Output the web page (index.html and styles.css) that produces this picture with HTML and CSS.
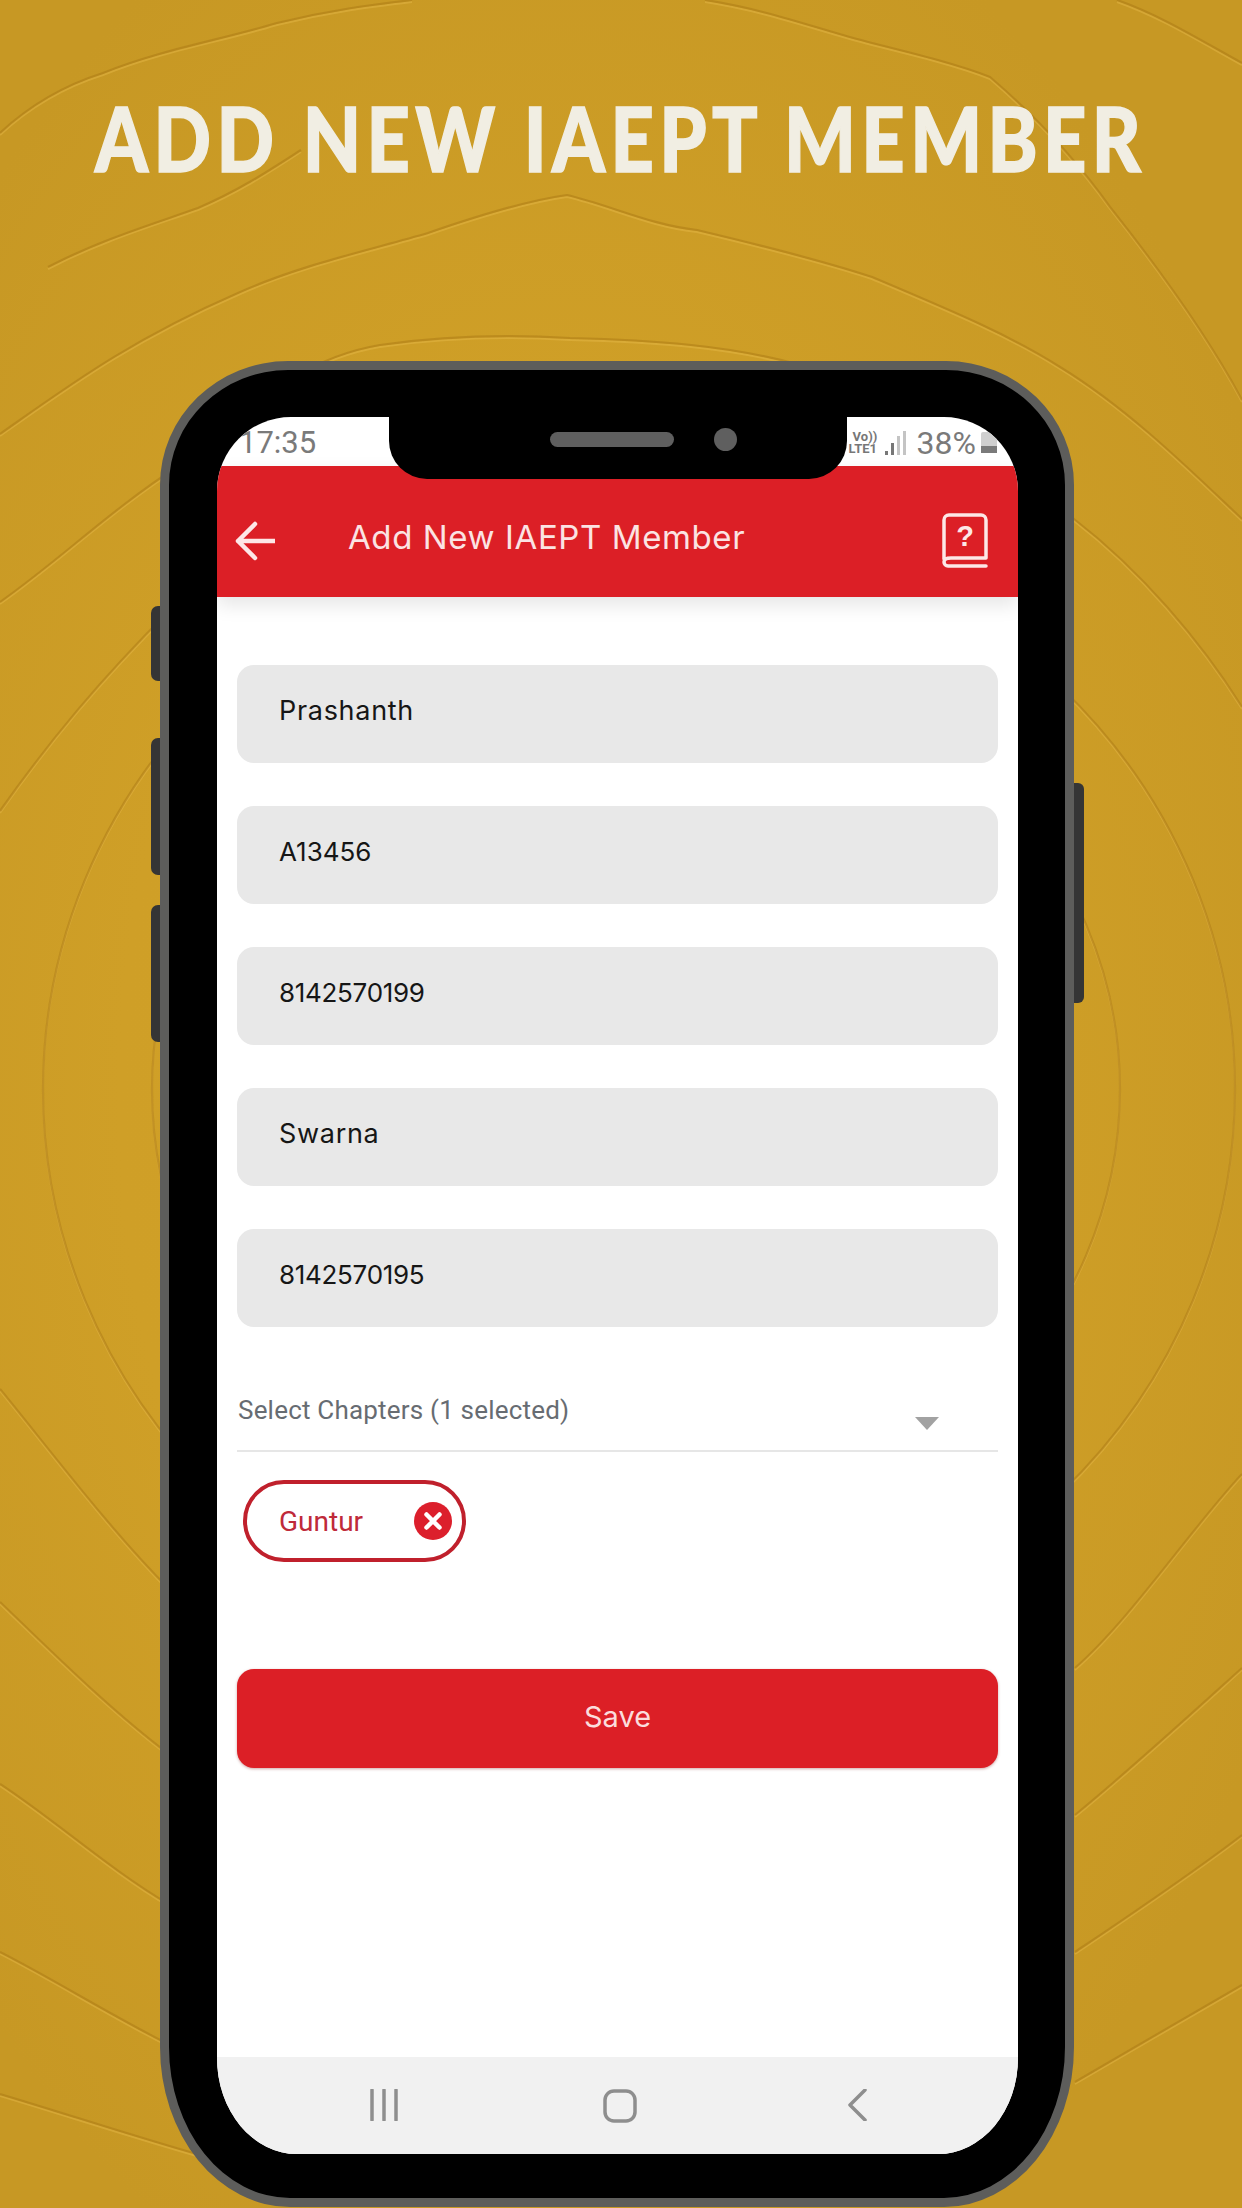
FILE: index.html
```html
<!DOCTYPE html>
<html lang="en">
<head>
<meta charset="utf-8">
<title>Add New IAEPT Member</title>
<link rel="stylesheet" href="styles.css">
</head>
<body>
<div class="page">
  <svg class="contours" viewBox="0 0 1242 2208" aria-hidden="true">
    <defs>
      <g id="rings" fill="none">
        <ellipse cx="636" cy="1090" rx="484" ry="450"/>
        <ellipse cx="639" cy="1090" rx="596" ry="570"/>
        <path d="M0 434C70 385 130 340 238 293C300 265 370 250 428 233C480 215 530 200 567 195C610 205 650 225 697 230C760 245 820 260 872 277C950 310 1010 335 1060 367C1130 410 1190 470 1242 519"/>
        <path d="M0 602C60 560 110 510 180 465C240 420 290 360 380 345C450 335 520 335 570 338C650 340 730 345 800 365C900 410 1000 470 1074 519C1140 570 1200 640 1242 707"/>
        <path d="M0 811C50 740 100 680 170 610"/>
        <path d="M0 133C30 105 65 85 103 73C160 50 220 40 277 23C330 10 370 5 412 0"/>
        <path d="M48 267C100 240 150 225 198 208C240 190 270 170 301 150"/>
        <path d="M705 0C770 10 820 30 872 43C920 55 960 65 990 77C1040 120 1080 165 1110 207C1160 270 1210 340 1242 400"/>
        <path d="M1117 0C1160 15 1200 40 1242 63"/>
        <path d="M0 1389C50 1450 110 1530 170 1590"/>
        <path d="M0 1602C50 1650 110 1710 170 1755"/>
        <path d="M0 1784C55 1820 110 1870 170 1905"/>
        <path d="M0 1952C55 1980 110 2015 170 2045"/>
        <path d="M0 2094C70 2115 130 2135 200 2155"/>
        <path d="M1075 1668C1130 1620 1190 1530 1242 1474"/>
        <path d="M1075 1815C1130 1770 1190 1715 1242 1668"/>
        <path d="M1075 1952C1130 1915 1190 1875 1242 1835"/>
        <path d="M1075 2082C1130 2050 1190 2015 1242 1985"/>
      </g>
    </defs>
    <use href="#rings" class="ring-light" x="0" y="2"/>
    <use href="#rings" class="ring-dark"/>
  </svg>

  <h1 class="headline"><span class="headline-text">ADD NEW IAEPT MEMBER</span></h1>

  <div class="phone">
    <span class="side-key key-a"></span>
    <span class="side-key key-b"></span>
    <span class="side-key key-c"></span>
    <span class="side-key key-power"></span>

    <div class="notch">
      <span class="speaker"></span>
      <span class="camera"></span>
    </div>

    <div class="screen">
      <div class="statusbar">
        <span class="clock">17:35</span>
        <div class="status-right">
          <div class="volte"><span>Vo))</span><span>LTE1</span></div>
          <svg class="signal" viewBox="0 0 22 24" aria-hidden="true">
            <rect class="bar-on" x="0" y="20" width="3" height="4"/>
            <rect class="bar-on" x="6" y="12" width="3" height="12"/>
            <rect class="bar-off" x="12" y="5" width="3" height="19"/>
            <rect class="bar-off" x="18" y="0" width="3" height="24"/>
          </svg>
          <span class="percent">38%</span>
          <div class="battery"><span class="battery-fill"></span></div>
        </div>
      </div>

      <header class="appbar">
        <svg class="back-arrow" viewBox="0 0 40 40" aria-hidden="true">
          <path d="M20 3L3 20L20 37M3 20H40"/>
        </svg>
        <div class="appbar-title">Add New IAEPT Member</div>
        <svg class="help-book" viewBox="0 0 46 55" aria-hidden="true">
          <path d="M2 46V7a5 5 0 0 1 5-5H39a5 5 0 0 1 5 5V45H9C4 45 2 47 2 49a4 4 0 0 0 4 4H44"/>
          <text class="help-mark" x="23" y="33" text-anchor="middle">?</text>
        </svg>
      </header>

      <main class="form">
        <div class="fields">
          <div class="field field-word">Prashanth</div>
          <div class="field">A13456</div>
          <div class="field field-number">8142570199</div>
          <div class="field field-word">Swarna</div>
          <div class="field field-number">8142570195</div>
        </div>

        <div class="select">
          <span class="select-label">Select Chapters (1 selected)</span>
          <span class="caret"></span>
        </div>

        <div class="chip">
          <span class="chip-label">Guntur</span>
          <svg class="chip-close" viewBox="0 0 38 38" aria-hidden="true">
            <circle cx="19" cy="19" r="19"/>
            <path d="M12.5 12.5L25.5 25.5M25.5 12.5L12.5 25.5"/>
          </svg>
        </div>

        <div class="save">Save</div>
      </main>

      <nav class="navbar">
        <svg class="nav-recents" viewBox="0 0 28 32" aria-hidden="true">
          <path d="M2 1V31M14 1V31M26 1V31"/>
        </svg>
        <svg class="nav-home" viewBox="0 0 34 34" aria-hidden="true">
          <rect x="2" y="2" width="30" height="30" rx="9"/>
        </svg>
        <svg class="nav-back" viewBox="0 0 20 32" aria-hidden="true">
          <path d="M18 1L3 16L18 31"/>
        </svg>
      </nav>
    </div>
  </div>
</div>
</body>
</html>
```

FILE: styles.css
```css
* { box-sizing: border-box; }

html, body { margin: 0; padding: 0; }

.page {
  position: relative;
  width: 1242px;
  height: 2208px;
  overflow: hidden;
  background: radial-gradient(ellipse 800px 1300px at 560px 1100px, #d2a228 0%, #cf9f27 55%, #c79824 100%);
}

.contours {
  position: absolute;
  inset: 0;
  width: 1242px;
  height: 2208px;
  filter: blur(0.7px);
}

.ring-dark { stroke: rgba(170, 120, 20, 0.5); stroke-width: 2.2; }
.ring-light { stroke: rgba(236, 190, 80, 0.4); stroke-width: 2; }

.headline {
  position: relative;
  margin: 0;
  height: 274px;
  display: flex;
  align-items: center;
  justify-content: center;
  white-space: nowrap;
}

.headline-text {
  display: block;
  font-family: "Lato", "Liberation Sans", sans-serif;
  font-size: 90px;
  font-weight: 900;
  letter-spacing: 6.4px;
  color: #f1eee3;
  -webkit-text-stroke: 1.5px #f1eee3;
  transform: scaleX(0.84);
}

.phone {
  position: relative;
  width: 914px;
  height: 1846px;
  margin: 87px 0 0 160px;
  padding: 47px 47px 44px 48px;
  background: #000;
  border: 9px solid #5d5d5b;
  border-radius: 128px 128px 130px 130px / 124px 124px 160px 160px;
}

.side-key {
  position: absolute;
  background: #353535;
}

.key-a, .key-b, .key-c {
  left: -18px;
  width: 9px;
  border-radius: 7px 0 0 7px;
}

.key-a { top: 236px; height: 75px; }
.key-b { top: 368px; height: 137px; }
.key-c { top: 535px; height: 137px; }

.key-power {
  right: -19px;
  top: 413px;
  width: 10px;
  height: 220px;
  border-radius: 0 6px 6px 0;
}

.notch {
  position: absolute;
  z-index: 2;
  left: 220px;
  top: 0;
  width: 458px;
  height: 109px;
  padding: 60px 0 0 161px;
  display: flex;
  align-items: flex-start;
  gap: 40px;
  background: #000;
  border-radius: 0 0 38px 38px;
}

.speaker {
  flex: none;
  width: 124px;
  height: 15px;
  margin-top: 2px;
  background: #5f5f5f;
  border-radius: 8px;
}

.camera {
  flex: none;
  width: 23px;
  height: 23px;
  margin-top: -2px;
  background: #5f5f5f;
  border-radius: 50%;
}

.screen {
  width: 100%;
  height: 100%;
  display: flex;
  flex-direction: column;
  overflow: hidden;
  background: #fff;
  border-radius: 74px 74px 80px 80px / 74px 74px 96px 96px;
}

.statusbar {
  flex: none;
  height: 49px;
  padding: 3px 21px 0 22px;
  display: flex;
  align-items: center;
  justify-content: space-between;
  color: #777;
  font-family: "Roboto", "Liberation Sans", sans-serif;
}

.clock, .percent {
  font-size: 31px;
  line-height: 36px;
  color: #7a7a7a;
}

.percent { font-size: 32px; }

.status-right {
  display: flex;
  align-items: center;
  margin-top: -1px;
}

.volte {
  display: flex;
  flex-direction: column;
  width: 33px;
  font-size: 13px;
  font-weight: 700;
  line-height: 12px;
  color: #777;
}

.volte span:first-child { margin-left: 4px; }

.signal {
  width: 22px;
  height: 24px;
  margin: 0 10px 0 3px;
}

.bar-on { fill: #777; }
.bar-off { fill: #c4c4c4; }

.battery {
  width: 16px;
  height: 21px;
  margin-left: 5px;
  display: flex;
  align-items: flex-end;
  background: #cfcfcf;
  border-radius: 2px 2px 0 0;
}

.battery-fill {
  width: 100%;
  height: 7px;
  background: #7a7a7a;
}

.appbar {
  position: relative;
  z-index: 1;
  flex: none;
  height: 131px;
  padding: 18px 30px 0 18px;
  display: flex;
  align-items: center;
  background: #dc1f26;
  box-shadow: 0 8px 18px rgba(0, 0, 0, 0.1);
}

.back-arrow {
  flex: none;
  width: 40px;
  height: 40px;
  fill: none;
  stroke: #fde7e7;
  stroke-width: 4.5;
  stroke-linecap: round;
  stroke-linejoin: round;
}

.appbar-title {
  flex: 1;
  margin: 0 0 8px 73px;
  font-family: "Inter", "Liberation Sans", sans-serif;
  font-size: 33px;
  letter-spacing: 0.6px;
  color: #fbe3e3;
}

.help-book {
  flex: none;
  width: 46px;
  height: 55px;
  fill: none;
  stroke: #fde7e7;
  stroke-width: 3.5;
  stroke-linecap: round;
  stroke-linejoin: round;
}

.help-mark {
  font-family: "Liberation Sans", sans-serif;
  font-size: 29px;
  font-weight: 700;
  fill: #fde7e7;
  stroke: none;
}

.form {
  flex: none;
  padding: 68px 20px 0;
  display: flex;
  flex-direction: column;
}

.fields {
  display: flex;
  flex-direction: column;
  gap: 43px;
}

.field {
  height: 98px;
  padding: 0 0 8px 42px;
  display: flex;
  align-items: center;
  background: #e8e8e8;
  border-radius: 17px;
  font-family: "Inter", "Liberation Sans", sans-serif;
  font-size: 26px;
  color: #161616;
}

.field-word { font-size: 27px; letter-spacing: 0.7px; }
.field-number { letter-spacing: -0.3px; }

.select {
  margin-top: 68px;
  padding: 0 59px 20px 1px;
  display: flex;
  justify-content: space-between;
  border-bottom: 2px solid #e6e6e6;
}

.select-label {
  font-family: "Roboto", "Liberation Sans", sans-serif;
  font-size: 26px;
  line-height: 30px;
  letter-spacing: 0.2px;
  color: #676c72;
}

.caret {
  width: 0;
  height: 0;
  margin-top: 22px;
  border-left: 12px solid transparent;
  border-right: 12px solid transparent;
  border-top: 13px solid #a2a2a2;
}

.chip {
  align-self: flex-start;
  width: 223px;
  height: 82px;
  margin: 28px 0 0 6px;
  padding: 0 10px 0 32px;
  display: flex;
  align-items: center;
  justify-content: space-between;
  background: #fff;
  border: 4px solid #c0202c;
  border-radius: 41px;
}

.chip-label {
  font-family: "Roboto", "Liberation Sans", sans-serif;
  font-size: 28px;
  color: #bf2a3a;
}

.chip-close {
  width: 38px;
  height: 38px;
}

.chip-close circle { fill: #dc1f2c; }

.chip-close path {
  fill: none;
  stroke: #fff;
  stroke-width: 4.5;
  stroke-linecap: round;
}

.save {
  height: 99px;
  margin-top: 107px;
  padding-bottom: 5px;
  display: flex;
  align-items: center;
  justify-content: center;
  background: #dc1f26;
  border-radius: 17px;
  box-shadow: 0 1px 3px rgba(120, 0, 0, 0.35);
  font-family: "Inter", "Liberation Sans", sans-serif;
  font-size: 29px;
  color: #fbdcdc;
}

.navbar {
  flex: none;
  height: 97px;
  margin-top: auto;
  padding: 32px 151px 0 153px;
  display: flex;
  align-items: flex-start;
  justify-content: space-between;
  background: #f1f1f1;
}

.nav-recents, .nav-home, .nav-back {
  fill: none;
  stroke: #8e8e8e;
  stroke-width: 3.5;
  stroke-linecap: round;
  stroke-linejoin: round;
}

.nav-recents { width: 28px; height: 32px; }
.nav-home { width: 34px; height: 34px; margin-right: 5px; }
.nav-back { width: 20px; height: 32px; }
```
